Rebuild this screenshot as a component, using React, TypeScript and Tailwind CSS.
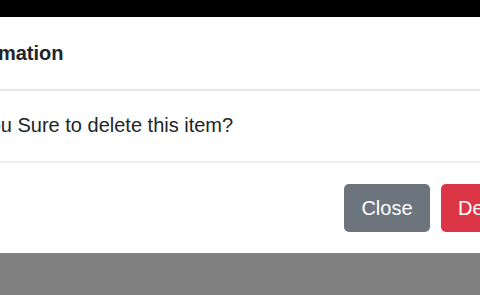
import React from "react";

export default function App() {
  return (
    <div
      className="w-[480px] h-[295px] overflow-hidden flex flex-col bg-[#808080]"
      style={{ fontFamily: '"Liberation Sans", Arial, sans-serif' }}
    >
      <div className="h-[17px] bg-black shrink-0" />
      <div className="bg-white shrink-0 flex flex-col">
        <div className="h-[74px] border-b-2 border-[#e6e6e6] pt-[21px] relative">
          <div className="absolute left-[-61px] top-[21px] whitespace-nowrap text-[20px] leading-[30px] font-bold text-[#212529]">
            Confirmation
          </div>
        </div>
        <div className="h-[72px] border-b-2 border-[#ececec] relative">
          <div className="absolute left-[-57px] top-[19px] whitespace-nowrap text-[20px] leading-[30px] text-[#212529]">
            Are you Sure to delete this item?
          </div>
        </div>
        <div className="h-[90px] flex items-center pl-[344px] gap-[11px] overflow-hidden">
          <button className="h-[48px] w-[86px] shrink-0 rounded-[5px] bg-[#6c757d] text-white text-[20px] leading-[30px]">
            Close
          </button>
          <button className="h-[48px] w-[96px] shrink-0 rounded-[5px] bg-[#dc3545] text-white text-[20px] leading-[30px] pl-[17px] text-left">
            Delete
          </button>
        </div>
      </div>
      <div className="flex-1" />
    </div>
  );
}
